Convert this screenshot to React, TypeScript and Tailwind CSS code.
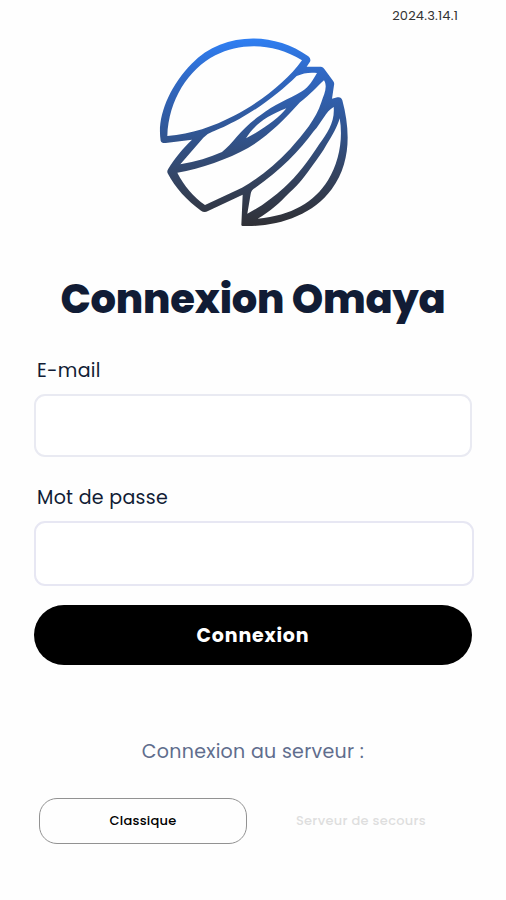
function Logo() {
  return (
    <svg className="ml-[150px] block h-[205px] w-[210px]" viewBox="0 0 630 615">
      <defs>
        <linearGradient id="globe" gradientUnits="userSpaceOnUse" x1="300" y1="20" x2="330" y2="590">
          <stop offset="0" stopColor="#2f80f5" />
          <stop offset="0.2" stopColor="#3069c6" />
          <stop offset="0.5" stopColor="#315591" />
          <stop offset="0.75" stopColor="#34435f" />
          <stop offset="1" stopColor="#303035" />
        </linearGradient>
      </defs>
      <path
        fill="url(#globe)"
        fillRule="evenodd"
        d="M32 332 C20 260 58 170 125 101 C215 9 365 1 475 79 Q484 86 480 95 L470 110 L513 110 Q520 111 523 117 L549 152 Q554 158 552 166 L546 206 L562 202 Q573 199 577 211 C602 305 602 400 545 478 C485 560 375 592 277 588 L274 586 L278 494 L174 543 Q163 549 153 542 C112 514 75 472 53 430 Q50 423 55 416 C73 386 99 354 126 329 L47 339 Q34 340 32 332 Z
        M52 318 C56 210 115 118 196 76 C278 35 375 41 456 91 C413 151 340 211 252 257 C190 289 125 312 52 318 Z
        M160 323 L91 403 C138 395 180 382 216 366 C249 340 274 294 331 256 C372 223 415 209 456 184 C478 170 489 149 501 129 C481 126 459 129 440 138 C394 183 335 230 269 266 C230 287 207 297 187 305 Q172 310 160 323 Z
        M288 325 C309 288 350 257 409 235 C388 263 339 299 288 325 Z
        M82 428 C153 416 235 387 294 354 C350 322 400 272 450 217 C482 193 502 169 522 151 C534 171 522 193 514 217 C498 267 461 312 421 356 C375 405 327 444 276 473 L165 525 C131 501 101 466 82 428 Z
        M302 492 Q303 480 316 473 C391 421 449 362 491 304 C516 277 527 244 551 231 C555 275 533 308 508 342 C477 390 440 440 402 473 C370 502 330 532 292 551 Z
        M323 566 C360 545 390 517 418 488 C450 460 470 430 487 407 C505 383 518 365 529 345 C548 315 562 290 569 265 C580 326 567 398 534 451 C493 517 425 557 323 566 Z"
      />
    </svg>
  )
}

export default function App() {
  return (
    <div className="h-[900px] w-[506px] bg-[#fefefe] font-['Poppins','Inter',sans-serif] text-[#111c35]">
      <header className="flex h-[30px] justify-end pr-12 pt-[6px]">
        <span className="text-[13px] leading-5 tracking-[0.2px] text-[#333]">2024.3.14.1</span>
      </header>
      <Logo />
      <h1 className="mt-[34px] whitespace-nowrap text-center text-[40px] font-extrabold leading-[60px] tracking-[-0.2px]">
        Connexion Omaya
      </h1>

      <form className="pl-[34px]">
        <label htmlFor="email" className="mt-[28px] block pl-[3px] text-[19px] leading-7 tracking-[0.3px]">
          E-mail
        </label>
        <input
          id="email"
          type="email"
          className="mt-[9px] block h-[63px] w-[438px] rounded-[11px] border-2 border-[#e9eaf2] bg-white px-4 outline-none"
        />
        <label htmlFor="password" className="mt-[27px] block pl-[3px] text-[19px] leading-7 tracking-[0.3px]">
          Mot de passe
        </label>
        <input
          id="password"
          type="password"
          className="mt-[9px] block h-[65px] w-[440px] rounded-[11px] border-2 border-[#e7e7f3] bg-white px-4 outline-none"
        />
        <button
          type="button"
          className="mt-[19px] block h-[60px] w-[438px] rounded-[30px] bg-black pt-[2px] text-[19px] font-bold tracking-[0.8px] text-white"
        >
          Connexion
        </button>
      </form>

      <p className="mt-[73px] text-center text-[19px] leading-7 tracking-[0.3px] text-[#606d8d]">
        Connexion au serveur :
      </p>
      <div className="mt-[32px] flex pl-[39px]">
        <button
          type="button"
          className="h-[46px] w-[208px] rounded-[18px] border border-[#929292] text-[13px] font-medium tracking-[0.25px] text-black"
        >
          Classique
        </button>
        <button
          type="button"
          className="ml-[11px] h-[46px] w-[206px] text-[13px] font-medium tracking-[0.3px] text-[#dedede]"
        >
          Serveur de secours
        </button>
      </div>
    </div>
  )
}
